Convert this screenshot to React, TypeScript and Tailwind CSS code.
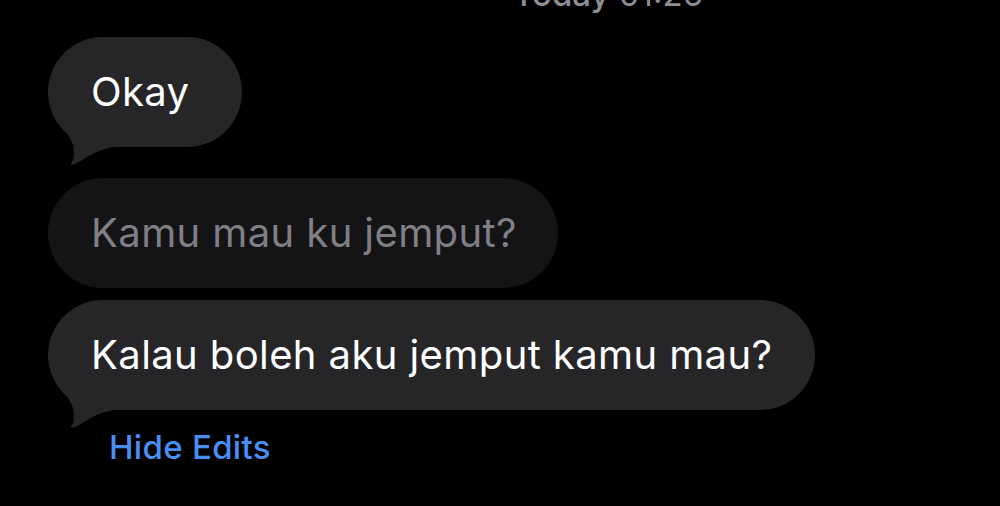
type Message = {
  id: number;
  text: string;
  width: string;
  edited?: boolean;
  tail?: boolean;
};

const messages: Message[] = [
  { id: 1, text: 'Okay', width: 'w-[194px]', tail: true },
  { id: 2, text: 'Kamu mau ku jemput?', width: 'w-[510px]', edited: true },
  { id: 3, text: 'Kalau boleh aku jemput kamu mau?', width: 'w-[767px]', tail: true },
];

function Tail({ color }: { color: string }) {
  return (
    <svg
      className="absolute left-0 bottom-[-20px]"
      width="70"
      height="60"
      viewBox="0 0 70 60"
      fill={color}
    >
      <path d="M 17 24 C 23 31, 26 38, 26 46 C 26 51, 25 54, 23 56 Q 22 59, 27 57 C 36 53, 48 42, 66 40 L 66 0 L 17 0 Z" />
    </svg>
  );
}

function Bubble({ message }: { message: Message }) {
  return (
    <div
      className={`relative h-[110px] rounded-[55px] flex items-center pl-[43px] ${message.width} ${
        message.edited ? 'bg-[#141416] text-[#807f85]' : 'bg-[#262629] text-white'
      }`}
    >
      {message.tail && <Tail color="#262629" />}
      <span className="relative text-[40px] leading-none tracking-[0.4px] whitespace-nowrap">
        {message.text}
      </span>
    </div>
  );
}

export default function App() {
  return (
    <div
      className="w-[1000px] h-[506px] bg-black overflow-hidden"
      style={{ fontFamily: 'Inter, "Liberation Sans", sans-serif' }}
    >
      {/* timestamp, cut off by the top of the screen */}
      <div className="mt-[-22px] ml-[513px] h-[33px] text-[33px] leading-none text-[#8e8e93] whitespace-nowrap">
        <span className="font-medium">Today</span> 01:26
      </div>

      <div className="pl-[48px] pt-[26px]">
        <Bubble message={messages[0]} />
        <div className="mt-[31px]">
          <Bubble message={messages[1]} />
        </div>
        <div className="mt-[12px]">
          <Bubble message={messages[2]} />
        </div>
        <div className="mt-[21px] ml-[61px] text-[33px] leading-none tracking-[0.3px] font-medium text-[#4a8ef3]">
          Hide Edits
        </div>
      </div>
    </div>
  );
}
